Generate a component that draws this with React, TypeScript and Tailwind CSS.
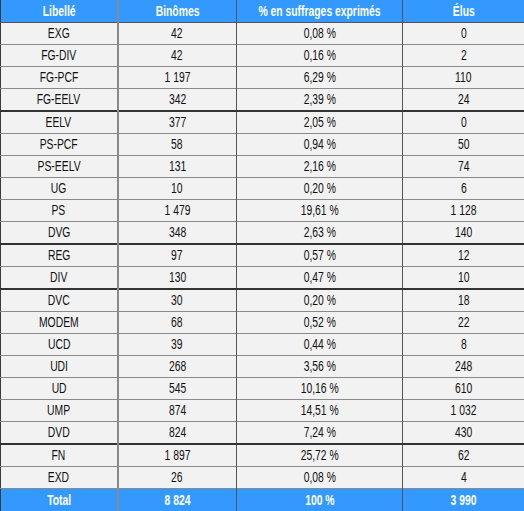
const rows: [string, string, string, string, boolean?][] = [
  ["EXG", "42", "0,08 %", "0"],
  ["FG-DIV", "42", "0,16 %", "2"],
  ["FG-PCF", "1 197", "6,29 %", "110"],
  ["FG-EELV", "342", "2,39 %", "24", true],
  ["EELV", "377", "2,05 %", "0"],
  ["PS-PCF", "58", "0,94 %", "50"],
  ["PS-EELV", "131", "2,16 %", "74"],
  ["UG", "10", "0,20 %", "6"],
  ["PS", "1 479", "19,61 %", "1 128"],
  ["DVG", "348", "2,63 %", "140", true],
  ["REG", "97", "0,57 %", "12"],
  ["DIV", "130", "0,47 %", "10", true],
  ["DVC", "30", "0,20 %", "18"],
  ["MODEM", "68", "0,52 %", "22"],
  ["UCD", "39", "0,44 %", "8"],
  ["UDI", "268", "3,56 %", "248"],
  ["UD", "545", "10,16 %", "610"],
  ["UMP", "874", "14,51 %", "1 032"],
  ["DVD", "824", "7,24 %", "430", true],
  ["FN", "1 897", "25,72 %", "62"],
  ["EXD", "26", "0,08 %", "4"],
];

const font = {
  fontFamily: '"Liberation Sans Narrow", "Liberation Sans", Arial, sans-serif',
};

// narrow look: the source font is condensed, squeeze Arial metrics
function T({ children }: { children: React.ReactNode }) {
  return <span className="inline-block scale-x-[0.74] whitespace-nowrap">{children}</span>;
}

export default function App() {
  return (
    <div className="w-[524px] h-[511px] bg-white text-[14px] leading-none text-[#111]" style={font}>
      <table className="w-[524px] border-collapse table-fixed border-x border-[#3a3a3a]">
        <colgroup>
          <col className="w-[117px]" />
          <col className="w-[119px]" />
          <col className="w-[166px]" />
          <col className="w-[122px]" />
        </colgroup>
        <thead>
          <tr className="h-[22px] bg-[#3399ff] text-white font-bold border-b border-[#555]">
            <th className="border-r-2 border-[#8a8a8a] font-bold"><T>Libellé</T></th>
            <th className="border-r border-[#555] font-bold"><T>Binômes</T></th>
            <th className="border-r border-[#555] font-bold"><T>% en suffrages exprimés</T></th>
            <th className="font-bold"><T>Élus</T></th>
          </tr>
        </thead>
        <tbody>
          {rows.map(([label, bin, pct, elus, sep]) => (
            <tr
              key={label}
              className={
                "bg-[#f2f2f2] text-center " +
                (sep ? "h-[23px] border-b-2 border-[#333]" : "h-[22px] border-b border-[#8a8a8a]")
              }
            >
              <td className="border-r-2 border-[#8a8a8a]"><T>{label}</T></td>
              <td className="border-r border-[#555]"><T>{bin}</T></td>
              <td className="border-r border-[#555]"><T>{pct}</T></td>
              <td><T>{elus}</T></td>
            </tr>
          ))}
          <tr className="h-[23px] bg-[#3399ff] text-white font-bold text-center border-b border-[#333]">
            <td className="border-r-2 border-[#8a8a8a]"><T>Total</T></td>
            <td className="border-r border-[#555]"><T>8 824</T></td>
            <td className="border-r border-[#555]"><T>100 %</T></td>
            <td><T>3 990</T></td>
          </tr>
        </tbody>
      </table>
    </div>
  );
}
